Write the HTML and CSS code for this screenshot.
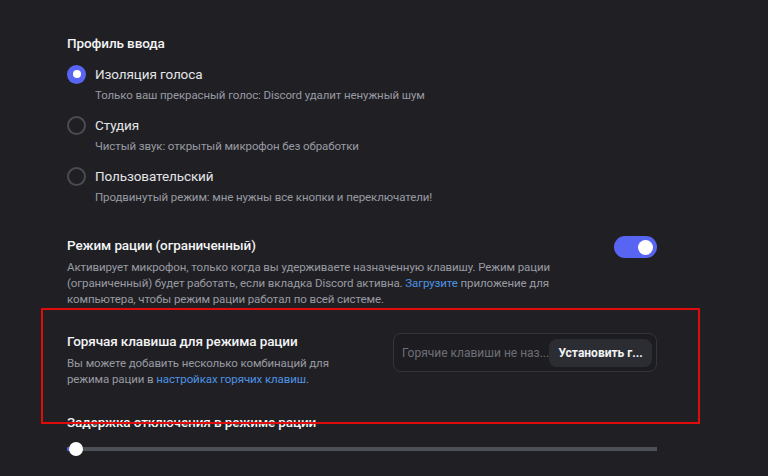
FILE: index.html
```html
<!DOCTYPE html>
<html lang="ru">
<head>
<meta charset="utf-8">
<title>Настройки голоса</title>
<link rel="stylesheet" href="styles.css">
</head>
<body>
<main class="page">
  <section class="profile">
    <h2 class="section-title">Профиль ввода</h2>
    <div class="radio-list">
      <div class="radio-item">
        <div class="radio-row">
          <span class="radio checked"></span>
          <span class="radio-label">Изоляция голоса</span>
        </div>
        <p class="radio-desc">Только ваш прекрасный голос: Discord удалит ненужный шум</p>
      </div>
      <div class="radio-item">
        <div class="radio-row">
          <span class="radio"></span>
          <span class="radio-label">Студия</span>
        </div>
        <p class="radio-desc">Чистый звук: открытый микрофон без обработки</p>
      </div>
      <div class="radio-item">
        <div class="radio-row">
          <span class="radio"></span>
          <span class="radio-label">Пользовательский</span>
        </div>
        <p class="radio-desc">Продвинутый режим: мне нужны все кнопки и переключатели!</p>
      </div>
    </div>
  </section>

  <section class="setting ptt">
    <div class="setting-text">
      <h3 class="setting-title">Режим рации (ограниченный)</h3>
      <p class="setting-desc">Активирует микрофон, только когда вы удерживаете назначенную клавишу. Режим рации (ограниченный) будет работать, если вкладка Discord активна. <a class="link" href="#">Загрузите</a> приложение для компьютера, чтобы режим рации работал по всей системе.</p>
    </div>
    <span class="toggle"><span class="knob"></span></span>
  </section>

  <section class="setting hotkey">
    <div class="setting-text">
      <h3 class="setting-title">Горячая клавиша для режима рации</h3>
      <p class="setting-desc narrow">Вы можете добавить несколько комбинаций для режима рации в <a class="link" href="#">настройках горячих клавиш</a>.</p>
    </div>
    <div class="keybind">
      <span class="keybind-placeholder">Горячие клавиши не наз...</span>
      <button class="keybind-btn">Установить г...</button>
    </div>
  </section>

  <section class="delay">
    <h3 class="setting-title">Задержка отключения в режиме рации</h3>
    <div class="slider">
      <span class="slider-fill"></span>
      <span class="slider-thumb"></span>
    </div>
  </section>

  <div class="highlight"></div>
</main>
</body>
</html>
```

FILE: styles.css
```css
* { box-sizing: border-box; }

html, body {
  margin: 0;
  padding: 0;
  background: #202024;
  height: 100%;
  overflow: hidden;
}

body {
  font-family: Roboto, "Liberation Sans", sans-serif;
  color: #dbdee1;
}

.page {
  position: relative;
  padding: 33px 111px 0 67px;
}

h2, h3, p { margin: 0; }

.section-title {
  font-size: 13.5px;
  letter-spacing: -0.1px;
  line-height: 20px;
  font-weight: 500;
  color: #f2f3f5;
}

.radio-list {
  margin-top: 11px;
  display: flex;
  flex-direction: column;
  gap: 12px;
}

.radio-row {
  display: flex;
  align-items: center;
  gap: 9px;
  height: 20px;
}

.radio {
  width: 19px;
  height: 19px;
  border-radius: 50%;
  border: 2px solid #4a4c53;
  flex: none;
  display: flex;
  align-items: center;
  justify-content: center;
}

.radio.checked {
  border: none;
  background: #5865f2;
}

.radio.checked::after {
  content: "";
  width: 8px;
  height: 8px;
  border-radius: 50%;
  background: #fff;
}

.radio-label {
  font-size: 13.5px;
  letter-spacing: -0.1px;
  line-height: 20px;
  color: #e3e5e8;
}

.radio-desc {
  margin-top: 3px;
  padding-left: 28px;
  font-size: 11.5px;
  letter-spacing: -0.1px;
  line-height: 16px;
  color: #989aa2;
}

.setting {
  display: flex;
  align-items: flex-start;
  justify-content: space-between;
  gap: 16px;
}

.setting-text { flex: 1; min-width: 0; }

.setting-title {
  font-size: 13.5px;
  letter-spacing: -0.1px;
  line-height: 20px;
  font-weight: 500;
  color: #f2f3f5;
}

.setting-desc {
  margin-top: 4px;
  font-size: 11.5px;
  letter-spacing: -0.1px;
  line-height: 16px;
  color: #989aa2;
}

.setting-desc.narrow { max-width: 300px; }

.link {
  color: #4e92e4;
  text-decoration: none;
}

.ptt { margin-top: 30px; }

.toggle {
  flex: none;
  width: 43px;
  height: 22px;
  margin-top: 1px;
  border-radius: 11px;
  background: #5865f2;
  display: flex;
  align-items: center;
  justify-content: flex-end;
  padding-right: 4px;
}

.knob {
  width: 15px;
  height: 15px;
  border-radius: 50%;
  background: #fff;
}

.hotkey { margin-top: 24px; }

.keybind {
  flex: none;
  width: 264px;
  height: 39px;
  margin-top: 2px;
  border: 1px solid #34353b;
  border-radius: 8px;
  background: #1d1d21;
  display: flex;
  align-items: center;
  justify-content: space-between;
  padding: 0 4px 0 8px;
}

.keybind-placeholder {
  font-size: 12px;
  color: #6d6f77;
  white-space: nowrap;
}

.keybind-btn {
  border: none;
  height: 28px;
  width: 105px;
  border-radius: 8px;
  background: #2c2d32;
  color: #f2f3f5;
  font-family: inherit;
  font-size: 12px;
  font-weight: 700;
  padding: 0;
}

.delay { margin-top: 25px; }

.slider {
  position: relative;
  margin-top: 10px;
  height: 14px;
  display: flex;
  align-items: center;
  background: linear-gradient(#4e5058, #4e5058) center / 100% 4px no-repeat;
  border-radius: 2px;
}

.slider-fill {
  position: absolute;
  left: 0;
  top: 5px;
  width: 6px;
  height: 4px;
  border-radius: 2px;
  background: #5865f2;
}

.slider-thumb {
  position: absolute;
  left: 2px;
  top: 0;
  width: 14px;
  height: 14px;
  border-radius: 50%;
  background: #fff;
}

.highlight {
  position: absolute;
  left: 41px;
  top: 308px;
  width: 659px;
  height: 116px;
  border: 2px solid #e00b0b;
  pointer-events: none;
}
```
